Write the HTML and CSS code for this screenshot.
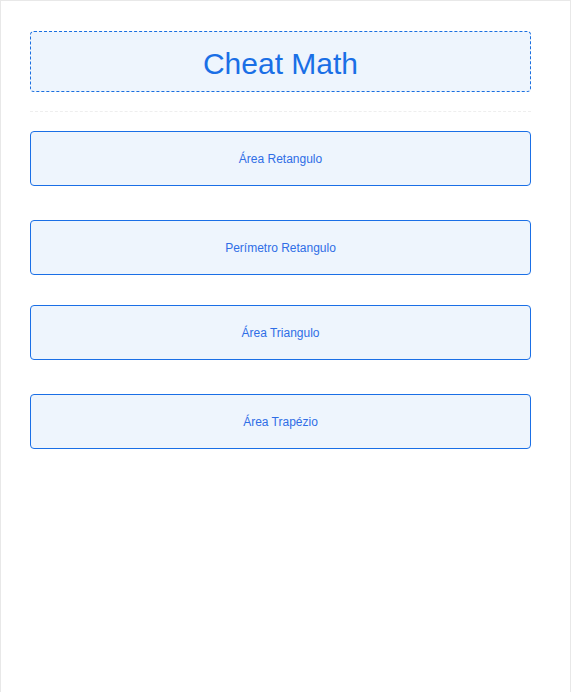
FILE: index.html
```html
<!DOCTYPE html>
<html lang="pt">
<head>
<meta charset="utf-8">
<title>Cheat Math</title>
<link rel="stylesheet" href="styles.css">
</head>
<body>
<div class="page">
  <div class="content">
    <h1 class="title">Cheat Math</h1>
    <hr class="divider">
    <div class="group">
      <button class="btn">Área Retangulo</button>
      <button class="btn">Perímetro Retangulo</button>
    </div>
    <div class="group">
      <button class="btn">Área Triangulo</button>
      <button class="btn">Área Trapézio</button>
    </div>
  </div>
</div>
</body>
</html>
```
FILE: styles.css
```css
html, body {
  margin: 0;
  padding: 0;
  background: #ffffff;
}
.page {
  box-sizing: border-box;
  width: 571px;
  min-height: 692px;
  border: 1px solid #e8e8e8;
  border-bottom: none;
  padding: 30px 0 0 29px;
  font-family: "Liberation Sans", Arial, sans-serif;
}
.content {
  width: 501px;
  display: flex;
  flex-direction: column;
}
.title {
  box-sizing: border-box;
  margin: 0;
  height: 61px;
  padding-top: 4px;
  border: 1px dashed #1a6fe0;
  border-radius: 4px;
  background: #eef5fd;
  color: #1a6fe6;
  font-size: 30px;
  font-weight: normal;
  display: flex;
  align-items: center;
  justify-content: center;
}
.divider {
  margin: 19px 0;
  border: none;
  border-top: 1px dashed #eeeeee;
  height: 0;
}
.group {
  display: flex;
  flex-direction: column;
  gap: 34px;
  margin-bottom: 30px;
}
.btn {
  box-sizing: border-box;
  height: 55px;
  width: 100%;
  border: 1px solid #1a6fe6;
  border-radius: 4px;
  background: #eef5fd;
  color: #2f6ee6;
  font-family: "Liberation Sans", Arial, sans-serif;
  font-size: 12px;
  padding: 0;
  cursor: pointer;
}
```
